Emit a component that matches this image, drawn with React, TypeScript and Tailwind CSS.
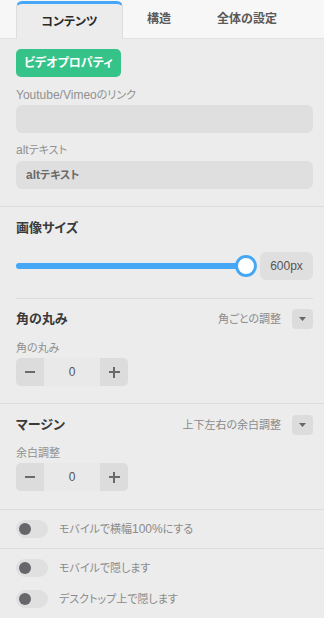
import React from "react";

const Toggle = ({ label }: { label: React.ReactNode }) => (
  <div className="flex items-center h-[18px]">
    <div className="w-[32px] h-[18px] rounded-full bg-[#e0e0e0] flex items-center pl-[3px]">
      <div className="w-[12px] h-[12px] rounded-full bg-[#67676b]" />
    </div>
    <span className="ml-[11px] text-[11px] text-[#8a8a8a] leading-[16px]">{label}</span>
  </div>
);

const Stepper = () => (
  <div className="flex w-[112px] h-[28px] rounded-[5px] overflow-hidden bg-[#e9e9e9]">
    <div className="w-[28px] h-full bg-[#dcdcdc] flex items-center justify-center">
      <div className="w-[10px] h-[2px] bg-[#6a6a6a]" />
    </div>
    <div className="flex-1 flex items-center justify-center text-[12px] text-[#555]">0</div>
    <div className="w-[28px] h-full bg-[#dcdcdc] flex items-center justify-center relative">
      <div className="w-[11px] h-[1.5px] bg-[#6a6a6a]" />
      <div className="absolute w-[1.5px] h-[11px] bg-[#6a6a6a]" />
    </div>
  </div>
);

const HeaderRow = ({ title, right }: { title: string; right: string }) => (
  <div className="flex items-center justify-between h-[20px]">
    <span className="text-[13px] font-bold text-[#3a3a3a] leading-[20px]">{title}</span>
    <div className="flex items-center">
      <span className="text-[11px] text-[#8a8a8a] mr-[11px]">{right}</span>
      <div className="w-[21px] h-[20px] rounded-[4px] bg-[#dcdcdc] flex items-center justify-center">
        <svg width="7" height="4" viewBox="0 0 7 4"><path d="M0 0h7L3.5 4z" fill="#666" /></svg>
      </div>
    </div>
  </div>
);

export default function App() {
  return (
    <div className="w-[324px] h-[618px] overflow-hidden bg-[#ececec] font-['Liberation_Sans','Noto_Sans_CJK_JP',sans-serif] [font-feature-settings:'palt']">
      {/* Tabs */}
      <div className="h-[39px] bg-[#f7f7f7] border-b border-[#e2e2e2] flex items-end px-4">
        <div className="w-[107px] h-[38px] bg-[#ececec] rounded-t-[6px] border-t-[3px] border-x border-t-[#45a7f6] border-x-[#dedede] -mb-px flex items-center justify-center text-[12px] font-bold text-[#2a2a2a]">
          コンテンツ
        </div>
        <div className="w-[72px] h-[38px] flex items-center justify-center text-[12px] font-semibold text-[#5a5a5a]">構造</div>
        <div className="w-[104px] h-[38px] flex items-center justify-center text-[12px] font-semibold text-[#5a5a5a]">全体の設定</div>
      </div>

      {/* Section 1 */}
      <div className="pl-4 pr-[11px] pt-[10px] pb-[17px] border-b border-[#dcdcdc]">
        <div className="inline-flex items-center h-[28px] px-[8px] rounded-[5px] bg-[#36c389] text-white text-[12px] font-bold">
          ビデオプロパティ
        </div>
        <div className="mt-[10px] text-[11px] leading-[16px] text-[#909090]">
          <span className="text-[12px]">Youtube/Vimeo</span>のリンク
        </div>
        <div className="mt-[2px] h-[28px] rounded-[6px] bg-[#dfdfdf]" />
        <div className="mt-[9px] text-[11px] leading-[16px] text-[#909090]">
          <span className="text-[12px]">alt</span>テキスト
        </div>
        <div className="mt-[3px] h-[28px] rounded-[6px] bg-[#dfdfdf] flex items-center px-[10px] text-[11px] font-bold text-[#6a6a6a]">
          <span className="text-[12px]">alt</span>テキスト
        </div>
      </div>

      {/* Section 2 */}
      <div className="pl-4 pr-[11px] pt-[11px]">
        <div className="text-[13px] font-bold text-[#3a3a3a] leading-[20px]">画像サイズ</div>
        <div className="mt-[14px] flex items-center h-[28px]">
          <div className="flex-1 flex items-center">
            <div className="flex-1 h-[6px] rounded-l-full bg-[#45a7f6]" />
            <div className="w-[22px] h-[22px] rounded-full border-[3px] border-[#45a7f6] bg-white -ml-[2px]" />
          </div>
          <div className="ml-[3px] w-[53px] h-[28px] rounded-[6px] bg-[#dfdfdf] flex items-center justify-center text-[12px] text-[#555]">
            600px
          </div>
        </div>
        <div className="mt-[18px] border-b border-[#dcdcdc]" />
      </div>

      {/* Section 3 */}
      <div className="pl-4 pr-[11px] pt-[10px] pb-[17px] border-b border-[#dcdcdc]">
        <HeaderRow title="角の丸み" right="角ごとの調整" />
        <div className="mt-[11px] text-[11px] leading-[16px] text-[#909090]">角の丸み</div>
        <div className="mt-[2px]"><Stepper /></div>
      </div>

      {/* Section 4 */}
      <div className="pl-4 pr-[11px] pt-[11px] pb-[18px] border-b border-[#dcdcdc]">
        <HeaderRow title="マージン" right="上下左右の余白調整" />
        <div className="mt-[10px] text-[11px] leading-[16px] text-[#909090]">余白調整</div>
        <div className="mt-[2px]"><Stepper /></div>
      </div>

      {/* Section 5 */}
      <div className="pl-4 pr-[11px] pt-[10px] pb-[10px] border-b border-[#dcdcdc]">
        <Toggle label={<>モバイルで横幅<span className="text-[12px]">100%</span>にする</>} />
      </div>

      {/* Section 6 */}
      <div className="pl-4 pr-[11px] pt-[10px] flex flex-col gap-[13px]">
        <Toggle label="モバイルで隠します" />
        <Toggle label="デスクトップ上で隠します" />
      </div>
    </div>
  );
}
